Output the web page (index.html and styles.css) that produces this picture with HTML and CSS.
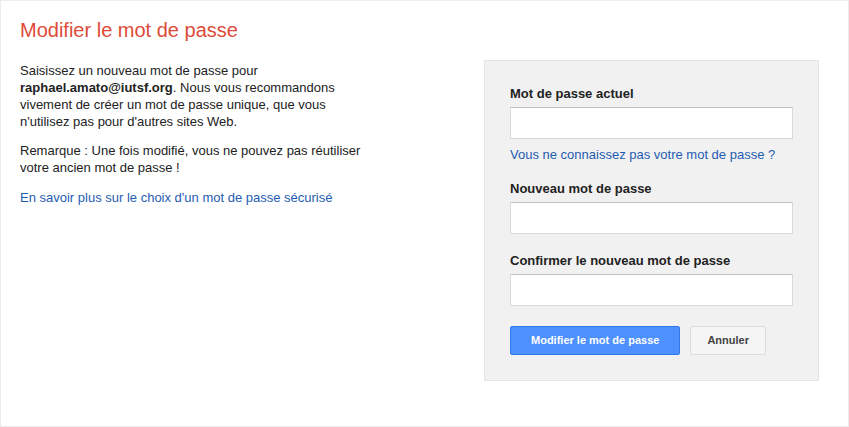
FILE: index.html
```html
<!DOCTYPE html>
<html lang="fr">
<head>
<meta charset="utf-8">
<title>Modifier le mot de passe</title>
<link rel="stylesheet" href="styles.css">
</head>
<body>
<div class="page">
  <h1 class="title">Modifier le mot de passe</h1>
  <div class="columns">
    <div class="intro">
      <p class="para">Saisissez un nouveau mot de passe pour <b>raphael.amato@iutsf.org</b>. Nous vous recommandons vivement de créer un mot de passe unique, que vous n'utilisez pas pour d'autres sites Web.</p>
      <p class="para para-note">Remarque : Une fois modifié, vous ne pouvez pas réutiliser votre ancien mot de passe !</p>
      <p class="para para-link"><a class="link" href="#">En savoir plus sur le choix d'un mot de passe sécurisé</a></p>
    </div>
    <form class="panel">
      <label class="label" for="cur">Mot de passe actuel</label>
      <input class="field" id="cur" type="password">
      <a class="link forgot" href="#">Vous ne connaissez pas votre mot de passe ?</a>
      <label class="label label-spaced" for="new">Nouveau mot de passe</label>
      <input class="field" id="new" type="password">
      <label class="label label-spaced label-last" for="conf">Confirmer le nouveau mot de passe</label>
      <input class="field" id="conf" type="password">
      <div class="actions">
        <button class="btn btn-primary" type="button">Modifier le mot de passe</button>
        <button class="btn btn-cancel" type="button">Annuler</button>
      </div>
    </form>
  </div>
</div>
</body>
</html>
```
FILE: styles.css
```css
html, body {
  margin: 0;
  padding: 0;
  background: #fff;
}
body {
  font-family: "Liberation Sans", Arial, sans-serif;
  font-size: 13px;
  line-height: 17px;
  color: #222;
}
.page {
  box-sizing: border-box;
  width: 849px;
  height: 427px;
  border: 1px solid #ececec;
  padding: 17px 29px 0 19px;
}
.title {
  margin: 0;
  font-size: 20px;
  line-height: 24px;
  font-weight: normal;
  color: #dd4b39;
}
.columns {
  display: flex;
  justify-content: space-between;
  align-items: flex-start;
  margin-top: -1px;
}
.intro {
  width: 342px;
  padding-top: 21px;
}
.para {
  margin: 0;
}
.para-note {
  margin-top: 12px;
}
.para-link {
  margin-top: 13px;
}
.link {
  color: #1f5cb2;
  text-decoration: none;
}
.panel {
  box-sizing: border-box;
  width: 335px;
  margin: 19px 0 0;
  padding: 24px 25px 25px;
  background: #f1f1f1;
  border: 1px solid #e5e5e5;
  display: flex;
  flex-direction: column;
  align-items: flex-start;
}
.label {
  display: block;
  font-weight: bold;
  color: #222;
  margin-bottom: 5px;
}
.label-spaced {
  margin-top: 17px;
}
.label-last {
  margin-top: 18px;
}
.field {
  box-sizing: border-box;
  width: 283px;
  height: 32px;
  margin: 0;
  padding: 0 8px;
  background: #fff;
  border: 1px solid #d9d9d9;
  border-top-color: #c0c0c0;
  border-radius: 1px;
  font: inherit;
  outline: none;
}
.forgot {
  margin-top: 7px;
}
.actions {
  display: flex;
  gap: 10px;
  margin-top: 20px;
}
.btn {
  box-sizing: border-box;
  height: 29px;
  padding: 0 16px;
  border-radius: 2px;
  font-family: "Liberation Sans", Arial, sans-serif;
  font-size: 11px;
  font-weight: bold;
  line-height: 27px;
  cursor: pointer;
}
.btn-primary {
  padding: 0 20px;
  background: #4d90fe;
  border: 1px solid #3079ed;
  color: #fff;
}
.btn-cancel {
  background: #f5f5f5;
  border: 1px solid #dcdcdc;
  color: #444;
}
```
